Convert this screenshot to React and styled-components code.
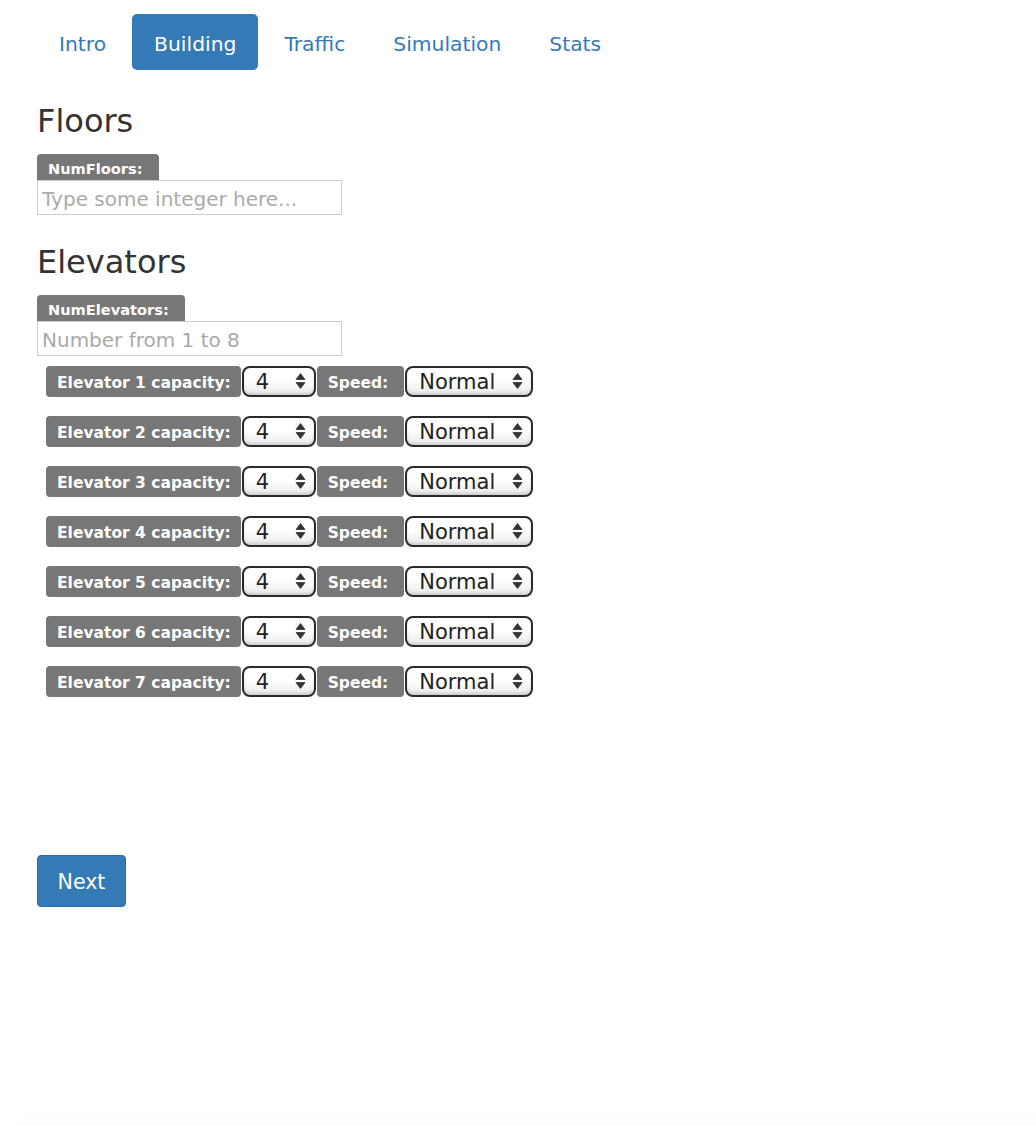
import React, { useState } from 'react';
import styled, { createGlobalStyle } from 'styled-components';

const GlobalStyle = createGlobalStyle`
  body {
    margin: 0;
    background: #fff;
    font-family: "DejaVu Sans", "Liberation Sans", sans-serif;
    color: #333;
  }
  * { box-sizing: border-box; }
`;

const tabs = ['Intro', 'Building', 'Traffic', 'Simulation', 'Stats'];
const elevators = [1, 2, 3, 4, 5, 6, 7];

const Arrows = () => (
  <svg width="11" height="18" viewBox="0 0 11 18">
    <path d="M5.5 1.5 L10 7.5 L1 7.5 Z" fill="#333" stroke="#333" strokeWidth="0.8" strokeLinejoin="round" />
    <path d="M5.5 16.5 L10 10.5 L1 10.5 Z" fill="#333" stroke="#333" strokeWidth="0.8" strokeLinejoin="round" />
  </svg>
);

const Dropdown = ({ width, options, value }) => {
  const [val, setVal] = useState(value);
  return (
    <SelectWrap width={width}>
      <Select value={val} onChange={(e) => setVal(e.target.value)}>
        {options.map((o) => (
          <option key={o}>{o}</option>
        ))}
      </Select>
      <ArrowIcon>
        <Arrows />
      </ArrowIcon>
    </SelectWrap>
  );
};

export default function App() {
  return (
    <Page>
      <GlobalStyle />
      <Container>
        <Nav>
          {tabs.map((t) => (
            <Pill key={t} active={t === 'Building'}>{t}</Pill>
          ))}
        </Nav>

        <Heading>Floors</Heading>
        <Tab>NumFloors:</Tab>
        <TextInput placeholder="Type some integer here..." />

        <Heading second>Elevators</Heading>
        <Tab>NumElevators:</Tab>
        <TextInput placeholder="Number from 1 to 8" />

        <Rows>
          {elevators.map((n) => (
            <Row key={n}>
              <RowLabel>Elevator {n} capacity:</RowLabel>
              <Dropdown width={74} value="4" options={['1', '2', '3', '4', '5', '6', '7', '8']} />
              <RowLabel speed>Speed:</RowLabel>
              <Dropdown width={128} value="Normal" options={['Slow', 'Normal', 'Fast']} />
            </Row>
          ))}
        </Rows>

        <NextButton>Next</NextButton>
      </Container>
      <Footer />
    </Page>
  );
}

const Page = styled.div`
  min-height: 1126px;
  display: flex;
  flex-direction: column;
`;

const Container = styled.div`
  padding: 14px 37px 0;
  display: flex;
  flex-direction: column;
  align-items: flex-start;
`;

const Nav = styled.div`
  display: flex;
  gap: 4px;
`;

const Pill = styled.a`
  display: block;
  height: 56px;
  line-height: 60px;
  padding: 0 22px;
  font-size: 20.3px;
  border-radius: 5px;
  text-decoration: none;
  cursor: pointer;
  color: ${(p) => (p.active ? '#fff' : '#337ab7')};
  background: ${(p) => (p.active ? '#337ab7' : 'transparent')};
`;

const Heading = styled.h2`
  margin: ${(p) => (p.second ? '29px' : '33px')} 0 15px;
  font-size: 32px;
  font-weight: normal;
  line-height: 36px;
  color: #333;
`;

const Tab = styled.div`
  height: 26px;
  line-height: 30px;
  padding: 0 16px 0 11px;
  background: #777;
  color: #fff;
  font-weight: bold;
  font-size: 14.6px;
  border-radius: 4px 4px 0 0;
`;

const TextInput = styled.input`
  width: 305px;
  height: 35px;
  border: 1px solid #ccc;
  padding: 2px 4px 0;
  font-family: inherit;
  font-size: 20px;
  color: #333;
  outline: none;
  &::placeholder {
    color: #aaa;
  }
`;

const Rows = styled.div`
  display: flex;
  flex-direction: column;
  gap: 19px;
  margin: 10px 0 0 9px;
`;

const Row = styled.div`
  display: flex;
  align-items: center;
  gap: 1px;
  height: 31px;
`;

const RowLabel = styled.div`
  height: 31px;
  line-height: 35px;
  padding: ${(p) => (p.speed ? '0 16px 0 11px' : '0 10px 0 11px')};
  background: #777;
  color: #fff;
  font-weight: bold;
  font-size: 15.5px;
  border-radius: 4px;
  white-space: nowrap;
`;

const SelectWrap = styled.div`
  position: relative;
  width: ${(p) => p.width}px;
  height: 31px;
`;

const Select = styled.select`
  appearance: none;
  -webkit-appearance: none;
  width: 100%;
  height: 100%;
  border: 2px solid #2a2a2a;
  border-radius: 8px;
  background: linear-gradient(#fff 0%, #fff 45%, #e9e9e9 100%);
  box-shadow: inset 0 -2px 3px rgba(0, 0, 0, 0.12);
  padding: 0 0 0 12px;
  font-family: inherit;
  font-size: 21px;
  color: #222;
  outline: none;
`;

const ArrowIcon = styled.span`
  position: absolute;
  right: 10px;
  top: 6px;
  pointer-events: none;
  display: flex;
`;

const NextButton = styled.button`
  margin-top: 158px;
  width: 89px;
  height: 52px;
  padding-top: 3px;
  background: #337ab7;
  border: 1px solid #2e6da4;
  border-radius: 4px;
  color: #fff;
  font-family: inherit;
  font-size: 20.5px;
  cursor: pointer;
`;

const Footer = styled.div`
  margin: auto 0 0 20px;
  height: 16px;
  background: #fdfdfd;
  border-radius: 14px 0 0 0;
`;
